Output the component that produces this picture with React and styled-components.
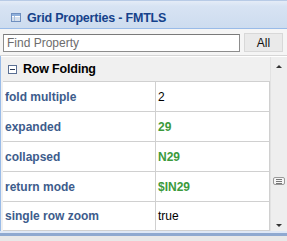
import React from "react";
import styled, { createGlobalStyle } from "styled-components";

const GlobalStyle = createGlobalStyle`
	html, body {
		margin: 0;
		padding: 0;
		background: #ffffff;
	}
	body {
		font-family: "Liberation Sans", Arial, sans-serif;
	}
`;

const rows = [
	{ label: "fold multiple", value: "2" },
	{ label: "expanded", value: "29", formula: true },
	{ label: "collapsed", value: "N29", formula: true },
	{ label: "return mode", value: "$IN29", formula: true },
	{ label: "single row zoom", value: "true" },
];

const GridIcon = () => (
	<svg width="10" height="9" viewBox="0 0 10 9">
		<rect x="0.5" y="0.5" width="9" height="8" fill="#ffffff" stroke="#6f8fbf" />
		<rect x="1" y="1" width="8" height="2" fill="#8fb0dc" />
		<line x1="1" y1="5" x2="9" y2="5" stroke="#a9bfdc" />
		<line x1="1" y1="7" x2="9" y2="7" stroke="#a9bfdc" />
		<line x1="3.5" y1="3" x2="3.5" y2="8" stroke="#a9bfdc" />
	</svg>
);

const CollapseIcon = () => (
	<svg width="9" height="9" viewBox="0 0 9 9">
		<rect x="0.5" y="0.5" width="8" height="8" fill="#ffffff" stroke="#5a6f93" />
		<line x1="2" y1="4.5" x2="7" y2="4.5" stroke="#2b3a57" />
	</svg>
);

const App = () => {
	return (
		<>
			<GlobalStyle />
			<Panel>
				<TitleBar>
					<GridIcon />
					<Title>Grid Properties - FMTLS</Title>
				</TitleBar>
				<SearchRow>
					<SearchInput placeholder="Find Property" />
					<AllButton>All</AllButton>
				</SearchRow>
				<Body>
					<Grid>
						<SectionHeader>
							<CollapseIcon />
							<span>Row Folding</span>
						</SectionHeader>
						{rows.map(({ label, value, formula }) => (
							<Row key={label}>
								<Label>{label}</Label>
								<Value $formula={formula}>{value}</Value>
							</Row>
						))}
					</Grid>
					<Scrollbar>
						<Arrow $up />
						<Grip>
							<span />
							<span />
							<span />
						</Grip>
						<Arrow />
					</Scrollbar>
				</Body>
				<Footer />
			</Panel>
		</>
	);
};

export default App;

const Panel = styled.div`
	width: 287px;
	height: 241px;
	display: flex;
	flex-direction: column;
	background: #f0f0f0;
	overflow: hidden;
`;

const TitleBar = styled.div`
	height: 29px;
	box-sizing: border-box;
	display: flex;
	align-items: center;
	gap: 6px;
	padding: 6px 0 0 11px;
	background: linear-gradient(#e4ecf7 0%, #d7e3f3 20%, #cddcef 100%);
	border-top: 1px solid #b8cbe6;
	border-bottom: 1px solid #99bbe8;
`;

const Title = styled.span`
	font-size: 12.5px;
	font-weight: bold;
	color: #15428b;
	letter-spacing: -0.2px;
`;

const SearchRow = styled.div`
	display: flex;
	align-items: center;
	gap: 4px;
	padding: 4px 4px 3px 3px;
	background: #f5f5f5;
	border-bottom: 1px solid #d6d6d6;
`;

const SearchInput = styled.input`
	width: 237px;
	height: 18px;
	box-sizing: border-box;
	border: 1px solid #8d8d8d;
	border-top-color: #7a7a7a;
	padding: 0 3px;
	font-family: "Liberation Sans", Arial, sans-serif;
	font-size: 12px;
	outline: none;
	&::placeholder {
		color: #6d6d6d;
	}
`;

const AllButton = styled.button`
	width: 39px;
	height: 19px;
	box-sizing: border-box;
	border: 1px solid #d8d8d8;
	background: #eaeaea;
	font-family: "Liberation Sans", Arial, sans-serif;
	font-size: 12px;
	color: #111111;
	padding: 0;
`;

const Body = styled.div`
	display: flex;
	padding-top: 1px;
	background: #ffffff;
	border-left: 1px solid #99bbe8;
`;

const Grid = styled.div`
	flex: 1;
	display: flex;
	flex-direction: column;
	padding-left: 2px;
	background: #f0f0f0;
`;

const SectionHeader = styled.div`
	height: 24px;
	display: flex;
	align-items: center;
	gap: 6px;
	padding-left: 5px;
	font-size: 12.5px;
	font-weight: bold;
	letter-spacing: -0.2px;
	color: #000000;
	background: #f0f0f0;
`;

const Row = styled.div`
	display: grid;
	grid-template-columns: 153px 1fr;
	height: 30px;
	box-sizing: border-box;
	border-top: 1px solid #d0d0d0;
	border-right: 1px solid #d0d0d0;
	background: #ffffff;
	&:last-child {
		border-bottom: 1px solid #d0d0d0;
	}
`;

const Label = styled.div`
	display: flex;
	align-items: center;
	padding-left: 2px;
	font-size: 12px;
	font-weight: bold;
	color: #3d5c8c;
	border-right: 1px solid #d0d0d0;
`;

const Value = styled.div`
	display: flex;
	align-items: center;
	padding-left: 2px;
	font-size: 12px;
	font-weight: ${(p) => (p.$formula ? "bold" : "normal")};
	color: ${(p) => (p.$formula ? "#3c9a3c" : "#000000")};
`;

const Scrollbar = styled.div`
	width: 16px;
	display: flex;
	flex-direction: column;
	align-items: center;
	justify-content: space-between;
	padding: 8px 0 4px;
	background: #eeeeee;
	border-left: 1px solid #e2e2e2;
`;

const Arrow = styled.div`
	width: 0;
	height: 0;
	border-left: 3px solid transparent;
	border-right: 3px solid transparent;
	${(p) =>
		p.$up
			? "border-bottom: 3px solid #333333;"
			: "border-top: 3px solid #333333;"}
`;

const Grip = styled.div`
	width: 12px;
	height: 8px;
	box-sizing: border-box;
	border: 1px solid #9a9a9a;
	border-radius: 2px;
	background: #f6f6f6;
	display: flex;
	flex-direction: column;
	justify-content: center;
	gap: 1px;
	padding: 0 2px;
	margin-top: 70px;
	span {
		height: 1px;
		background: #777777;
	}
`;

const Footer = styled.div`
	flex: 1;
	background: #e8e8e8;
	border-top: 2px solid #dfe8f6;
	box-shadow: inset 0 3px 0 #8fa9d0;
`;
